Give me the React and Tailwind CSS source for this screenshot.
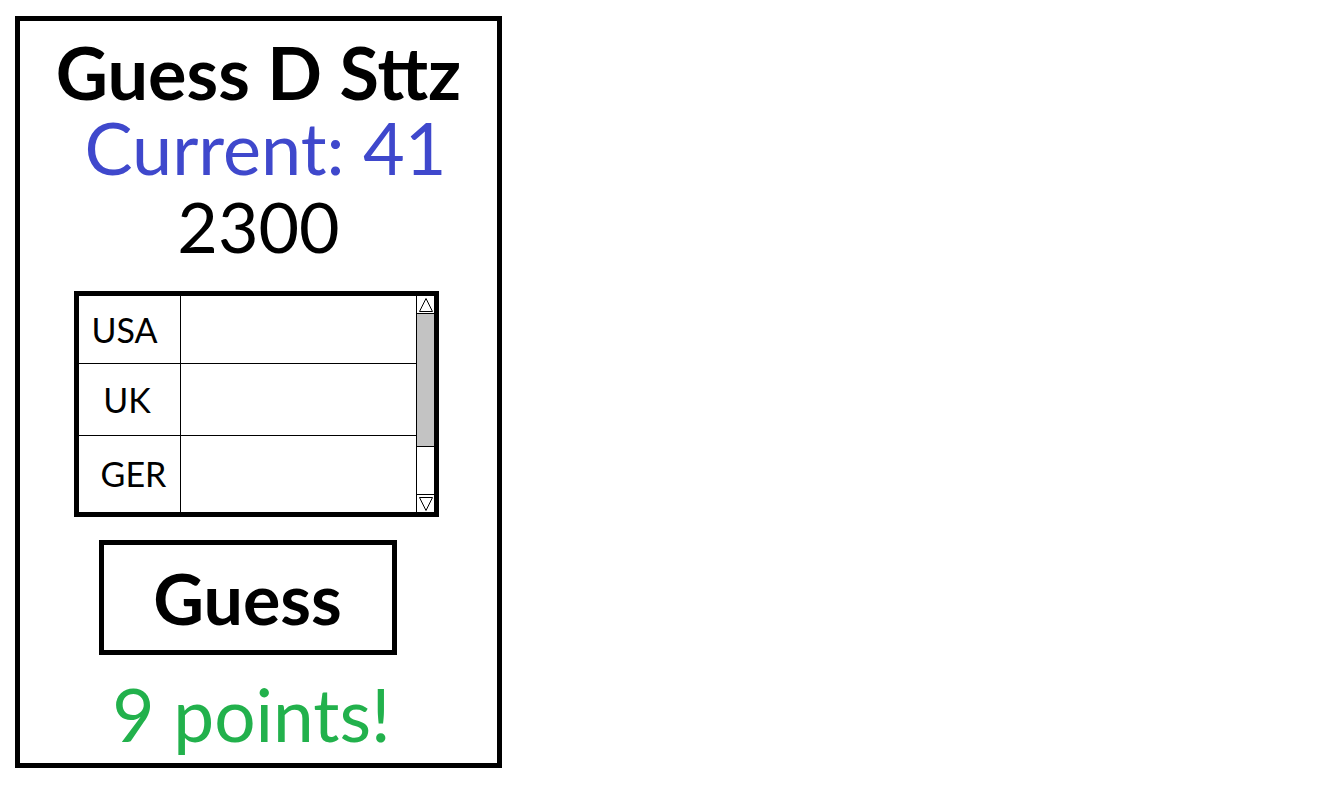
import React from "react";

const rows = [
  { name: "USA", h: "h-[68px]", pad: "pr-[10px]" },
  { name: "UK", h: "h-[72px]", pad: "pr-[5px]" },
  { name: "GER", h: "flex-1", pad: "pl-[8px]" },
];

const Arrow = ({ down }) => (
  <svg width="16" height="16" viewBox="0 0 16 16" className="block">
    <polygon
      points={down ? "1.5,1.5 14.5,1.5 8,14.5" : "1.5,14.5 14.5,14.5 8,1.5"}
      fill="none"
      stroke="black"
      strokeWidth="1"
    />
  </svg>
);

const ScoreTable = () => (
  <div className="mt-[30px] mr-[4px] w-[365px] h-[226px] border-[5px] border-black flex">
    <div className="flex-1 flex flex-col">
      {rows.map((r, i) => (
        <div
          key={r.name}
          className={`${r.h} flex ${i < rows.length - 1 ? "border-b border-black" : ""}`}
        >
          <div className={`w-[102px] ${r.pad} border-r border-black flex items-center justify-center text-[34px] leading-none`}>
            {r.name}
          </div>
          <div className="flex-1" />
        </div>
      ))}
    </div>
    <div className="w-[18px] border-l border-black flex flex-col">
      <div className="h-[18px] border-b border-black flex items-center justify-center">
        <Arrow />
      </div>
      <div className="h-[133px] bg-[#c3c3c3] border-b border-black" />
      <div className="flex-1 border-b border-black" />
      <div className="h-[17px] flex items-center justify-center">
        <Arrow down />
      </div>
    </div>
  </div>
);

export default function App() {
  return (
    <div className="bg-white w-[1317px] h-[791px] pt-[16px] pl-[15px] font-['Lato',sans-serif] text-black">
      <div className="w-[487px] h-[752px] border-[5px] border-black flex flex-col items-center">
        <h1 className="mt-[15px] text-[72px] leading-[72px] font-bold">Guess D Sttz</h1>
        <p className="mt-[3px] ml-[14px] text-[72px] leading-[72px] text-[#3f48cc]">Current: 41</p>
        <p className="mt-[8px] text-[70px] leading-[70px]">2300</p>
        <ScoreTable />
        <button className="mt-[23px] mr-[22px] w-[298px] h-[115px] border-[5px] border-black flex items-center justify-center text-[70px] leading-none font-bold">
          Guess
        </button>
        <p className="mt-[23px] mr-[14px] text-[73px] leading-[73px] text-[#22b14c]">9 points!</p>
      </div>
    </div>
  );
}
